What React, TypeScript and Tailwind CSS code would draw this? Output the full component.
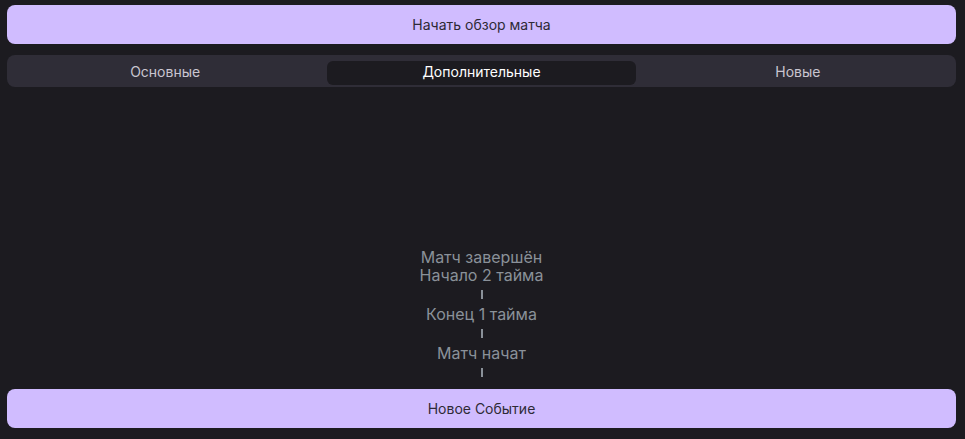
import React, { useState } from 'react';

const tabs = ['Основные', 'Дополнительные', 'Новые'];

const events = ['Начало 2 тайма', 'Конец 1 тайма', 'Матч начат'];

export default function App() {
  const [active, setActive] = useState(1);

  return (
    <div
      className="flex h-[439px] w-full flex-col bg-[#1c1b20] pl-[7px] pr-[9px] pt-[5px] pb-[11px]"
      style={{ fontFamily: 'Inter, "Noto Sans", sans-serif' }}
    >
      <button className="h-[39px] w-full shrink-0 rounded-[8px] bg-[#d0bcff] text-[14px] text-[#2e2a36]">
        Начать обзор матча
      </button>

      <div className="mt-[11px] grid h-[32px] shrink-0 grid-cols-3 rounded-[8px] bg-[#2f2d37]">
        {tabs.map((t, i) => (
          <div key={t} className="p-1">
            <button
              onClick={() => setActive(i)}
              className={
                i === active
                  ? 'h-full w-full rounded-[6px] bg-[#1c1b20] pb-[2px] text-[14px] leading-[18px] text-white'
                  : 'h-full w-full rounded-[6px] pb-[2px] text-[14px] leading-[18px] text-[#c9c5d0]'
              }
            >
              {t}
            </button>
          </div>
        ))}
      </div>

      {/* таймлайн матча */}
      <div className="flex flex-1 flex-col items-center justify-end pb-[6px] text-[16px] leading-[18px] text-[#8a9199]">
        <div>Матч завершён</div>
        {events.map((e) => (
          <React.Fragment key={e}>
            <div>{e}</div>
            <div className="my-[6px] h-[9px] w-[2px] bg-[#8a9199]" />
          </React.Fragment>
        ))}
      </div>

      <button className="h-[39px] w-full shrink-0 rounded-[8px] bg-[#d0bcff] text-[14px] text-[#2e2a36]">
        Новое Событие
      </button>
    </div>
  );
}
